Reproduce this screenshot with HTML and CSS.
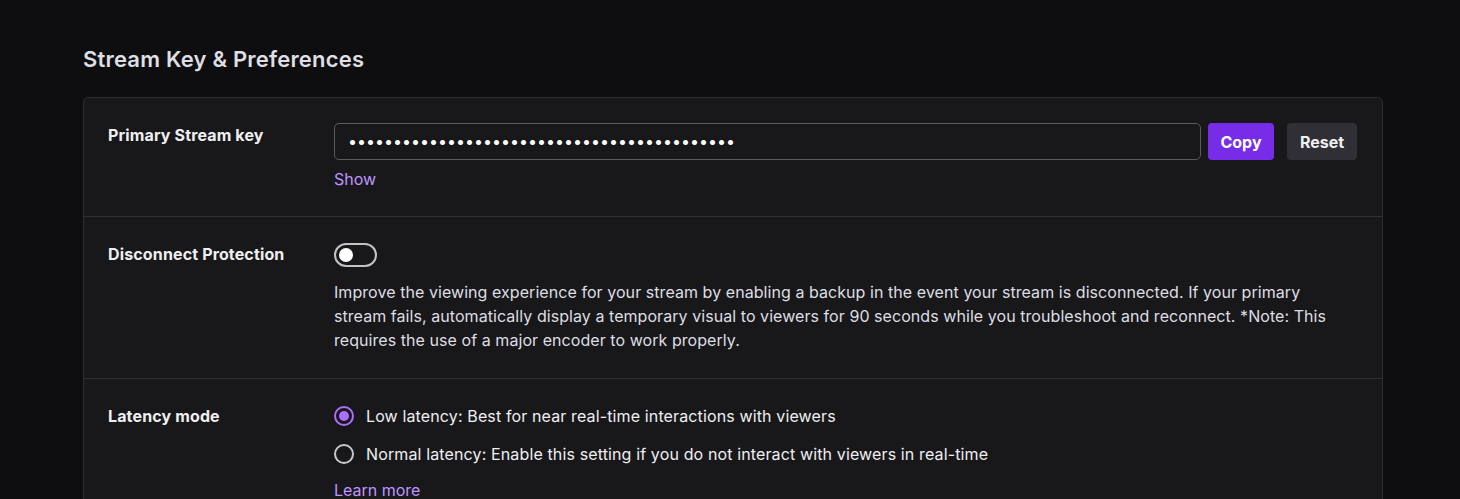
FILE: index.html
```html
<!DOCTYPE html>
<html lang="en">
<head>
<meta charset="utf-8">
<title>Stream Key &amp; Preferences</title>
<link rel="stylesheet" href="styles.css">
</head>
<body>
<main class="page">
  <h2 class="title">Stream Key &amp; Preferences</h2>
  <section class="card">
    <div class="row">
      <div class="label">Primary Stream key</div>
      <div class="content">
        <div class="key-line">
          <div class="key-input">•••••••••••••••••••••••••••••••••••••••••••</div>
          <button class="btn btn-primary">Copy</button>
          <button class="btn btn-secondary">Reset</button>
        </div>
        <a class="link show-link" href="#">Show</a>
      </div>
    </div>
    <div class="row">
      <div class="label">Disconnect Protection</div>
      <div class="content">
        <div class="toggle"><span class="knob"></span></div>
        <p class="desc">Improve the viewing experience for your stream by enabling a backup in the event your stream is disconnected. If your primary stream fails, automatically display a temporary visual to viewers for 90 seconds while you troubleshoot and reconnect. *Note: This requires the use of a major encoder to work properly.</p>
      </div>
    </div>
    <div class="row">
      <div class="label">Latency mode</div>
      <div class="content">
        <div class="radio-item first"><span class="radio checked"></span><span class="radio-text">Low latency: Best for near real-time interactions with viewers</span></div>
        <div class="radio-item"><span class="radio"></span><span class="radio-text">Normal latency: Enable this setting if you do not interact with viewers in real-time</span></div>
        <a class="link learn-link" href="#">Learn more</a>
      </div>
    </div>
  </section>
</main>
</body>
</html>
```
FILE: styles.css
```css
html, body {
  margin: 0;
  padding: 0;
  background: #0e0e10;
  color: #efeff1;
  font-family: Inter, "Noto Sans", sans-serif;
  overflow: hidden;
}
.page {
  padding: 46px 0 0 83px;
}
.title {
  margin: 0 0 25px 0;
  font-size: 22px;
  line-height: 26px;
  font-weight: 600;
  letter-spacing: 0.2px;
  color: #dedee3;
}
.card {
  width: 1298px;
  background: #18181b;
  border: 1px solid #2c2c31;
  border-radius: 5px;
}
.row {
  display: grid;
  grid-template-columns: 226px 1fr;
  padding: 25px 25px 26px 24px;
  border-bottom: 1px solid #2f2f35;
}
.row:last-child {
  border-bottom: none;
}
.label {
  font-size: 16px;
  font-weight: 700;
  line-height: 25px;
  letter-spacing: 0.14px;
  color: #efeff1;
}
.content {
  display: flex;
  flex-direction: column;
  align-items: flex-start;
}
.key-line {
  display: flex;
  align-items: center;
  width: 100%;
}
.key-input {
  flex: 1;
  height: 35px;
  border: 1px solid #5a5a62;
  border-radius: 5px;
  padding: 0 13px;
  font-size: 16px;
  line-height: 35px;
  letter-spacing: 0;
  color: #ffffff;
  overflow: hidden;
  white-space: nowrap;
}
.btn {
  height: 37px;
  border: none;
  border-radius: 4px;
  font-family: inherit;
  font-size: 16px;
  font-weight: 700;
  color: #efeff1;
  padding: 0;
  cursor: pointer;
}
.btn-primary {
  width: 66px;
  margin-left: 7px;
  background: #772ce8;
  color: #ffffff;
}
.btn-secondary {
  width: 70px;
  margin-left: 13px;
  background: #2f2f35;
}
.link {
  color: #bf94ff;
  text-decoration: none;
  font-size: 16px;
  line-height: 20px;
}
.show-link {
  margin-top: 9px;
  margin-bottom: 1px;
}
.toggle {
  position: relative;
  width: 39px;
  height: 20px;
  border: 2px solid #c2c2c8;
  border-radius: 12px;
  margin-top: 1px;
}
.knob {
  position: absolute;
  left: 3px;
  top: 3px;
  width: 14px;
  height: 14px;
  border-radius: 50%;
  background: #ffffff;
}
.desc {
  margin: 13px 0 0 0;
  max-width: 1010px;
  font-size: 16px;
  line-height: 24px;
  letter-spacing: 0.06px;
  color: #dedee3;
}
.radio-item {
  display: flex;
  align-items: center;
  height: 22px;
  margin-bottom: 16px;
}
.radio-item.first {
  margin-top: 1px;
}
.radio {
  flex: none;
  width: 16px;
  height: 16px;
  border: 2px solid #c8c8ce;
  border-radius: 50%;
  position: relative;
  margin-right: 12px;
}
.radio.checked {
  border-color: #a970ff;
}
.radio.checked::after {
  content: "";
  position: absolute;
  left: 3px;
  top: 3px;
  width: 10px;
  height: 10px;
  border-radius: 50%;
  background: #a970ff;
}
.radio-text {
  font-size: 16px;
  line-height: 22px;
  letter-spacing: 0.13px;
  color: #efeff1;
}
.learn-link {
  margin-top: -1px;
}
```
